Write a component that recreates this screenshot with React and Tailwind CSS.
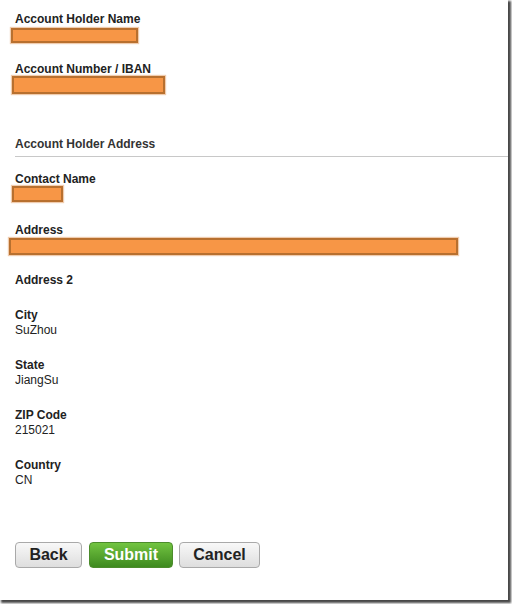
const Label = ({ children, className = "" }) => (
  <div className={`text-[12px] leading-[14px] font-bold text-[#222] ${className}`}>{children}</div>
);

const Value = ({ children }) => (
  <div className="text-[12px] leading-[14px] text-[#222] mt-[1px]">{children}</div>
);

// redacted value bar
const Bar = ({ className = "" }) => (
  <div
    className={`h-[15px] bg-[#f79646] border-2 border-[#b8702f] shadow-[0_0_1px_1px_rgba(230,170,120,0.6)] ${className}`}
  />
);

const App = () => {
  const fields = [
    ["City", "SuZhou"],
    ["State", "JiangSu"],
    ["ZIP Code", "215021"],
    ["Country", "CN"],
  ];

  return (
    <div className="w-[512px] h-[604px] bg-white font-['Liberation_Sans',Arial,sans-serif]">
      <div className="w-[508px] h-[600px] bg-white shadow-[2px_2px_2px_1px_rgba(40,40,40,0.85)] flex flex-col pl-[15px]">
        <Label className="mt-[12px]">Account Holder Name</Label>
        <Bar className="w-[127px] -ml-[4px] mt-[2px]" />

        <Label className="mt-[19px]">Account Number / IBAN</Label>
        <Bar className="w-[153px] h-[18px] -ml-[3px]" />

        <div className="mt-[43px] text-[12px] leading-[14px] font-bold text-[#333]">
          Account Holder Address
        </div>
        <div className="mt-[5px] border-t border-[#c8c8c8]" />

        <Label className="mt-[15px]">Contact Name</Label>
        <Bar className="w-[51px] h-[16px] -ml-[3px]" />

        <Label className="mt-[21px]">Address</Label>
        <Bar className="w-[449px] h-[17px] -ml-[6px] mt-[1px]" />

        <Label className="mt-[18px]">Address 2</Label>

        <div className="flex flex-col gap-[21px] mt-[21px]">
          {fields.map(([k, v]) => (
            <div key={k}>
              <Label>{k}</Label>
              <Value>{v}</Value>
            </div>
          ))}
        </div>

        <div className="flex mt-[55px]">
          <button className="h-[26px] w-[67px] rounded-[4px] border border-[#a9a9a9] bg-gradient-to-b from-[#f8f8f8] to-[#dedede] text-[16px] font-bold text-[#222]">
            Back
          </button>
          <button className="ml-[7px] h-[26px] w-[84px] rounded-[4px] border border-[#4c8c2c] bg-gradient-to-b from-[#72c441] to-[#3e8a1f] text-[16px] font-bold text-white">
            Submit
          </button>
          <button className="ml-[6px] h-[26px] w-[81px] rounded-[4px] border border-[#a9a9a9] bg-gradient-to-b from-[#f8f8f8] to-[#dedede] text-[16px] font-bold text-[#222]">
            Cancel
          </button>
        </div>
      </div>
    </div>
  );
};

export default App;
